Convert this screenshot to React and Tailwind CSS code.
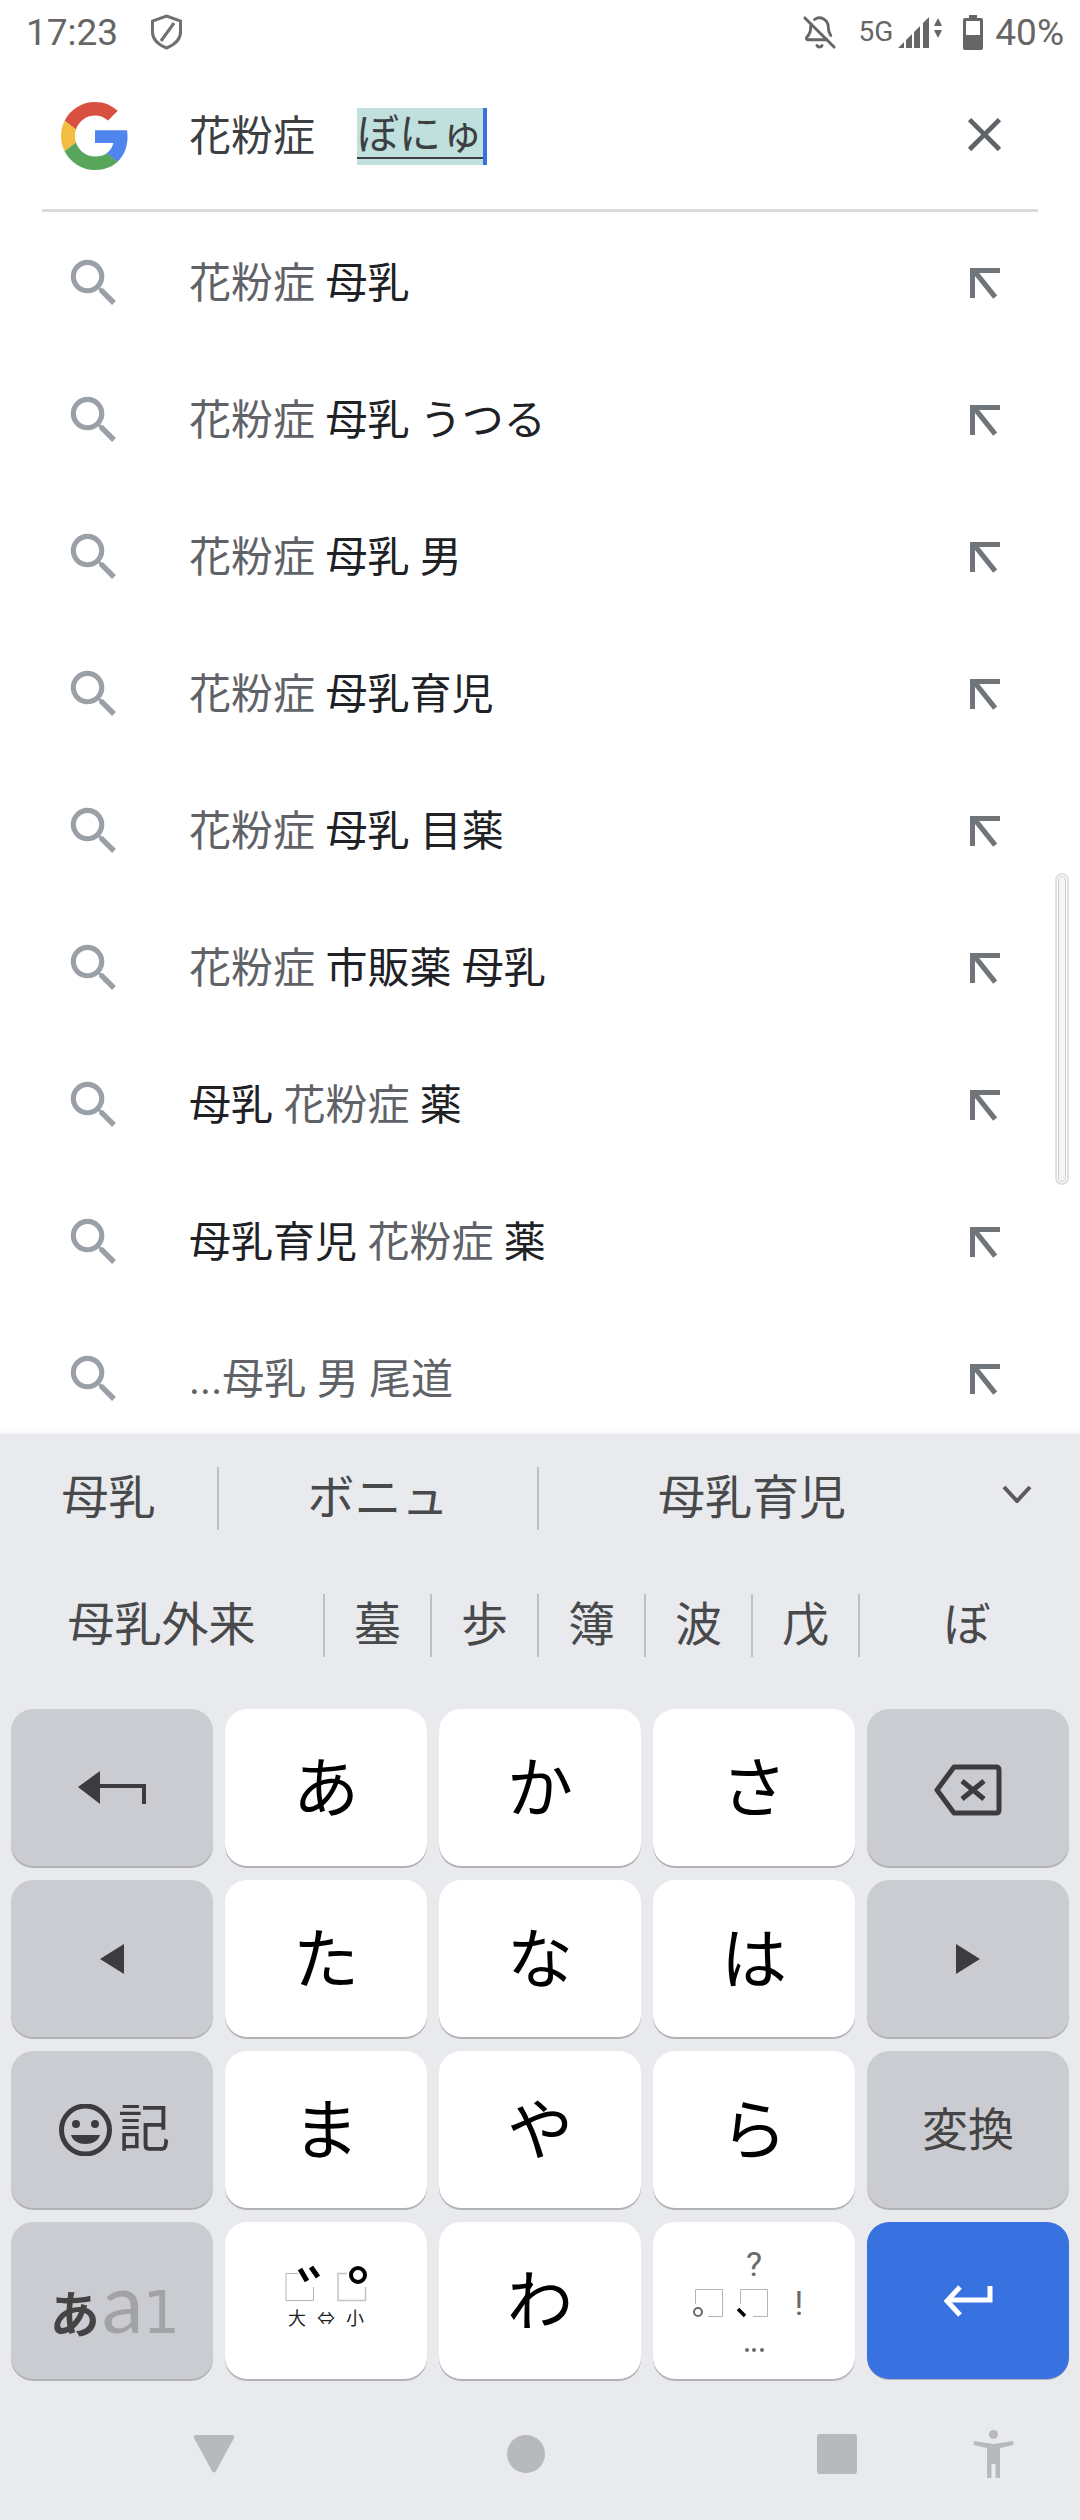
import React from 'react';
import { BellOff } from 'lucide-react';

const GRAY = 'text-[#5f6368]';

const suggestions = [
  [['花粉症', true], [' 母乳', false]],
  [['花粉症', true], [' 母乳 うつる', false]],
  [['花粉症', true], [' 母乳 男', false]],
  [['花粉症', true], [' 母乳育児', false]],
  [['花粉症', true], [' 母乳 目薬', false]],
  [['花粉症', true], [' 市販薬 母乳', false]],
  [['母乳 ', false], ['花粉症', true], [' 薬', false]],
  [['母乳育児 ', false], ['花粉症', true], [' 薬', false]],
  [['...母乳 男 尾道', true]],
];

function GoogleG() {
  return (
    <svg width="68" height="68" viewBox="0 0 48 48">
      <path fill="#d95040" d="M24 9.5c3.54 0 6.71 1.22 9.21 3.6l6.85-6.85C35.9 2.38 30.47 0 24 0 14.62 0 6.51 5.38 2.56 13.22l7.98 6.19C12.43 13.72 17.74 9.5 24 9.5z" />
      <path fill="#5085ee" d="M46.98 24.55c0-1.57-.15-3.09-.38-4.55H24v9.02h12.94c-.58 2.96-2.26 5.48-4.78 7.18l7.73 6c4.51-4.18 7.09-10.36 7.09-17.65z" />
      <path fill="#f3bd42" d="M10.53 28.59c-.48-1.45-.76-2.99-.76-4.59s.27-3.14.76-4.59l-7.98-6.19C.92 16.46 0 20.12 0 24c0 3.88.92 7.54 2.56 10.78l7.97-6.19z" />
      <path fill="#58a65c" d="M24 48c6.48 0 11.93-2.13 16.08-5.81l-7.73-6c-2.15 1.45-4.92 2.3-8.35 2.3-6.26 0-11.57-4.22-13.47-9.91l-7.98 6.19C6.51 42.62 14.62 48 24 48z" />
    </svg>
  );
}

function SearchIcon() {
  return (
    <svg className="mb-[2px]" width="62" height="62" viewBox="0 0 24 24" fill="#9aa0a6">
      <path d="M15.5 14h-.79l-.28-.27A6.471 6.471 0 0 0 16 9.5 6.5 6.5 0 1 0 9.5 16c1.61 0 3.09-.59 4.23-1.57l.27.28v.79l5 4.99L20.49 19l-4.99-5zm-6 0C7.01 14 5 11.99 5 9.5S7.01 5 9.5 5 14 7.01 14 9.5 11.99 14 9.5 14z" />
    </svg>
  );
}

function ArrowNW() {
  return (
    <svg className="mb-[4px]" width="48" height="48" viewBox="0 0 24 24" fill="#70757a">
      <path d="M5 20 H7.5 V9 L16.6 20.4 L18.6 18.8 L9.6 7.5 H20 V5 H5 Z" />
    </svg>
  );
}

function CloseIcon() {
  return (
    <svg width="57" height="57" viewBox="0 0 24 24" fill="#5f6368">
      <path d="M19 6.41L17.59 5 12 10.59 6.41 5 5 6.41 10.59 12 5 17.59 6.41 19 12 13.41 17.59 19 19 17.59 13.41 12z" />
    </svg>
  );
}

function StatusBar() {
  return (
    <div className="flex h-[60px] items-center pt-1 text-[#666666]">
      <span className="ml-[26px] text-[37px] leading-none">17:23</span>
      <svg className="ml-[32px]" width="33" height="36" viewBox="0 0 33 36" fill="none" stroke="#707070" strokeWidth="3">
        <path d="M16.5 2 L30.5 7 V18 C30.5 26 24 31 16.5 34 C9 31 2.5 26 2.5 18 V7 Z" />
        <path d="M24 9 L11 27" />
      </svg>
      <div className="ml-auto flex items-center">
        <BellOff size={35} strokeWidth={2} />
        <span className="ml-[21px] text-[28px] leading-none">5G</span>
        <svg className="ml-[5px]" width="45" height="34" viewBox="0 0 45 34" fill="#666666">
          <path d="M0 33 L6 27 V33 Z M8 33 V25 L14 19 V33 Z M16 33 V17 L22 11 V33 Z M25 33 V8 L31 2 V33 Z" />
          <path d="M36 11 L40 3 L44 11 Z M36 15 H44 L40 23 Z" />
        </svg>
        <svg className="ml-[20px]" width="20" height="35" viewBox="0 0 20 35" fill="#666666">
          <path fillRule="evenodd" d="M6 0 H14 V3 H18 Q20 3 20 5 V33 Q20 35 18 35 H2 Q0 35 0 33 V5 Q0 3 2 3 H6 Z M3 6 V20 H17 V6 Z" />
        </svg>
        <span className="ml-[12px] mr-[16px] text-[37px] leading-none">40%</span>
      </div>
    </div>
  );
}

function SearchRow() {
  return (
    <div className="flex h-[149px] items-center pl-[61px] pt-[3px] text-[42px] text-[#3c4043]">
      <GoogleG />
      <div className="ml-[60px] flex items-center">
        <span>花粉症　</span>
        <span className="flex h-[57px] w-[130px] items-center border-r-4 border-[#3871e0] bg-[#bfe0dc]">
          <span className="border-b-2 border-[#3c4043] leading-[44px]">ぼにゅ</span>
        </span>
      </div>
      <div className="ml-auto mr-[67px] mb-[3px]">
        <CloseIcon />
      </div>
    </div>
  );
}

function SuggestionRow({ parts }) {
  return (
    <div className="flex h-[137px] shrink-0 items-center pl-[63px] pr-[72px] text-[42px]">
      <SearchIcon />
      <div className="ml-[64px] whitespace-pre">
        {parts.map(([text, gray], i) => (
          <span key={i} className={gray ? GRAY : 'text-[#202124]'}>{text}</span>
        ))}
      </div>
      <div className="ml-auto">
        <ArrowNW />
      </div>
    </div>
  );
}

function Candidate({ children, className }) {
  return (
    <div className={'flex h-[63px] items-center justify-center ' + className}>{children}</div>
  );
}

function Candidates() {
  return (
    <div className="pt-[1px] text-[47px] text-[#48494b]">
      <div className="flex h-[127px] items-center">
        <Candidate className="w-[219px] border-r-2 border-[#bfc0c4]">母乳</Candidate>
        <Candidate className="w-[320px] border-r-2 border-[#bfc0c4]">ボニュ</Candidate>
        <Candidate className="w-[426px]">母乳育児</Candidate>
        <svg className="ml-[37px] mb-[10px]" width="30" height="18" viewBox="0 0 30 18" fill="none" stroke="#5a5a5a" strokeWidth="4">
          <path d="M2 2 L15 16 L28 2" />
        </svg>
      </div>
      <div className="flex h-[126px] items-center">
        <Candidate className="w-[325px] border-r-2 border-[#bfc0c4]">母乳外来</Candidate>
        <Candidate className="w-[107px] border-r-2 border-[#bfc0c4]">墓</Candidate>
        <Candidate className="w-[107px] border-r-2 border-[#bfc0c4]">歩</Candidate>
        <Candidate className="w-[107px] border-r-2 border-[#bfc0c4]">簿</Candidate>
        <Candidate className="w-[107px] border-r-2 border-[#bfc0c4]">波</Candidate>
        <Candidate className="w-[107px] border-r-2 border-[#bfc0c4]">戊</Candidate>
        <Candidate className="flex-1 pr-[6px]">ぼ</Candidate>
      </div>
    </div>
  );
}

function Key({ children, kind = 'white', className = '' }) {
  const colors = {
    white: 'bg-white text-black shadow-[0_2px_0_#b1b2b6]',
    gray: 'bg-[#cbccd1] text-[#3c3c3f] shadow-[0_2px_0_#b1b2b6]',
    blue: 'bg-[#3871e0] text-white shadow-[0_1px_0_#b1b2b6]',
  };
  return (
    <div className={'flex h-[157px] items-center justify-center rounded-[22px] ' + colors[kind] + ' ' + className}>
      {children}
    </div>
  );
}

function Kana({ children }) {
  return <span className="pt-[4px] text-[66px] leading-none">{children}</span>;
}

function DakutenKey() {
  return (
    <Key className="flex-col">
      <svg className="mb-[8px] ml-[2px] mt-[-8px]" width="84" height="36" viewBox="0 0 84 36" fill="none">
        <path d="M13 7.5 H1 V34.5 H28.5 V21" stroke="#b4b4b4" />
        <path d="M15 3 L22 15 M26 1 L33 11" stroke="#000000" strokeWidth="5" />
        <path d="M62 7.5 H53 V34.5 H80.5 V21" stroke="#c4c4c4" strokeWidth="1.5" />
        <circle cx="73" cy="9" r="7" stroke="#000000" strokeWidth="4" />
      </svg>
      <div className="flex w-[76px] justify-between text-[18px] leading-none text-[#222222]">
        <span>大</span><span>⇔</span><span>小</span>
      </div>
    </Key>
  );
}

function PunctKey() {
  return (
    <Key className="flex-col text-[#6a6a6a]">
      <span className="mt-[-3px] text-[34px] leading-[34px] text-[#6a6a6a]">?</span>
      <div className="mt-[5px] mr-[6px] flex items-center text-[#6a6a6a]">
        <svg width="32" height="30" viewBox="0 0 32 30" fill="none">
          <path d="M3.5 16 V1.5 H30.5 V28.5 H16" stroke="#b4b4b4" />
          <circle cx="6" cy="24" r="4" stroke="#6a6a6a" strokeWidth="2" />
        </svg>
        <svg className="ml-[13px]" width="32" height="30" viewBox="0 0 32 30" fill="none">
          <path d="M3.5 16 V1.5 H30.5 V28.5 H16" stroke="#b4b4b4" />
          <path d="M1 21 L8 28" stroke="#000000" strokeWidth="3.5" />
        </svg>
        <span className="ml-[26px] w-[16px] text-[34px] leading-none">!</span>
      </div>
      <div className="mt-[28px] flex gap-[3.5px]">
        <span className="size-[4px] rounded-full bg-[#6a6a6a]" />
        <span className="size-[4px] rounded-full bg-[#6a6a6a]" />
        <span className="size-[4px] rounded-full bg-[#6a6a6a]" />
      </div>
    </Key>
  );
}

function Keyboard() {
  return (
    <div className="grid grid-cols-[repeat(5,202px)] gap-x-3 gap-y-[14px] px-[11px] pt-[21px]">
      <Key kind="gray">
        <svg width="68" height="33" viewBox="0 0 68 33" fill="#3c3c3f">
          <path d="M0 16 L22 0 V33 Z M22 13 H68 V33 H64 V17 H22 Z" />
        </svg>
      </Key>
      <Key><Kana>あ</Kana></Key>
      <Key><Kana>か</Kana></Key>
      <Key><Kana>さ</Kana></Key>
      <Key kind="gray">
        <svg className="mt-[4px]" width="68" height="52" viewBox="0 0 68 52" fill="none" stroke="#3c3c3f" strokeWidth="5" strokeLinejoin="round">
          <path d="M20 3 H62 Q65 3 65 6 V46 Q65 49 62 49 H20 L3 26 Z" />
          <path d="M28 17 L50 35 M50 17 L28 35" />
        </svg>
      </Key>

      <Key kind="gray">
        <svg width="24" height="30" viewBox="0 0 24 30" fill="#3c3c3f"><path d="M0 15 L24 0 V30 Z" /></svg>
      </Key>
      <Key><Kana>た</Kana></Key>
      <Key><Kana>な</Kana></Key>
      <Key><Kana>は</Kana></Key>
      <Key kind="gray">
        <svg width="24" height="30" viewBox="0 0 24 30" fill="#3c3c3f"><path d="M24 15 L0 0 V30 Z" /></svg>
      </Key>

      <Key kind="gray" className="pl-[5px]">
        <svg width="53" height="52" viewBox="0 0 53 52" fill="none" stroke="#3c3c3f" strokeWidth="5">
          <circle cx="26.5" cy="26" r="24" />
          <circle cx="17" cy="20" r="4" fill="#3c3c3f" stroke="none" />
          <circle cx="36" cy="20" r="4" fill="#3c3c3f" stroke="none" />
          <path d="M12 31 H41 C38 43 15 43 12 31 Z" fill="#3c3c3f" stroke="none" />
        </svg>
        <span className="ml-[6px] text-[52px] leading-none">記</span>
      </Key>
      <Key><Kana>ま</Kana></Key>
      <Key><Kana>や</Kana></Key>
      <Key><Kana>ら</Kana></Key>
      <Key kind="gray"><span className="text-[46px] leading-none text-[#444444]">変換</span></Key>

      <Key kind="gray" className="pl-[6px]">
        <div className="flex items-baseline leading-none">
          <span className="text-[50px] font-bold text-[#444444]">あ</span>
          <span className="ml-[2px] font-['Lato'] text-[84px] text-[#a2a3a7]">a</span>
          <span className="ml-[-1px] font-['DejaVu_Sans'] text-[59px] text-[#a2a3a7]">1</span>
        </div>
      </Key>
      <DakutenKey />
      <Key><Kana>わ</Kana></Key>
      <PunctKey />
      <Key kind="blue">
        <svg width="50" height="34" viewBox="0 0 50 34" fill="none" stroke="#ffffff" strokeWidth="5">
          <path d="M47 2 V16 H5" />
          <path d="M17 3 L4 17 L17 31" />
        </svg>
      </Key>
    </div>
  );
}

function NavBar() {
  return (
    <div className="flex flex-1 items-center pl-[193px] pt-[8px]">
      <svg width="42" height="38" viewBox="0 0 42 38" fill="#b8b9bc">
        <path d="M3 0 H39 Q42 0 41 3 L23 36 Q21 39 19 36 L1 3 Q0 0 3 0 Z" />
      </svg>
      <span className="ml-[272px] size-[38px] rounded-full bg-[#b8b9bc]" />
      <span className="ml-[272px] size-[40px] rounded-[3px] bg-[#b8b9bc]" />
      <svg className="ml-[116px]" width="41" height="48" viewBox="0 0 41 48" fill="#b8b9bc">
        <circle cx="20.5" cy="4.5" r="4.5" />
        <path d="M1 11 L20.5 14 L40 11 L40.5 15 L27 18 V48 H22.5 V34 H18.5 V48 H14 V18 L0.5 15 Z" />
      </svg>
    </div>
  );
}

export default function App() {
  return (
    <div className="flex h-[2520px] w-[1080px] flex-col overflow-hidden bg-white font-[Roboto,'Noto_Sans_CJK_JP',sans-serif]">
      <StatusBar />
      <SearchRow />
      <div className="mx-[42px] h-[3px] shrink-0 bg-[#dadce0]" />
      <div className="relative flex h-[1222px] flex-col overflow-hidden pt-[3px]">
        {suggestions.map((parts, i) => (
          <SuggestionRow key={i} parts={parts} />
        ))}
        {/* overlay scrollbar */}
        <div className="absolute right-[11px] top-[661px] h-[312px] w-[14px] rounded-full border-2 border-[#e0e0e0] bg-white p-[1px]">
          <div className="h-full w-full rounded-full border border-[#cfcfcf] bg-[#f6f6f6]" />
        </div>
      </div>
      <div className="flex flex-1 flex-col bg-[#e8eaed] shadow-[0_-2px_3px_rgba(0,0,0,0.05)]">
        <Candidates />
        <Keyboard />
        <NavBar />
      </div>
    </div>
  );
}
